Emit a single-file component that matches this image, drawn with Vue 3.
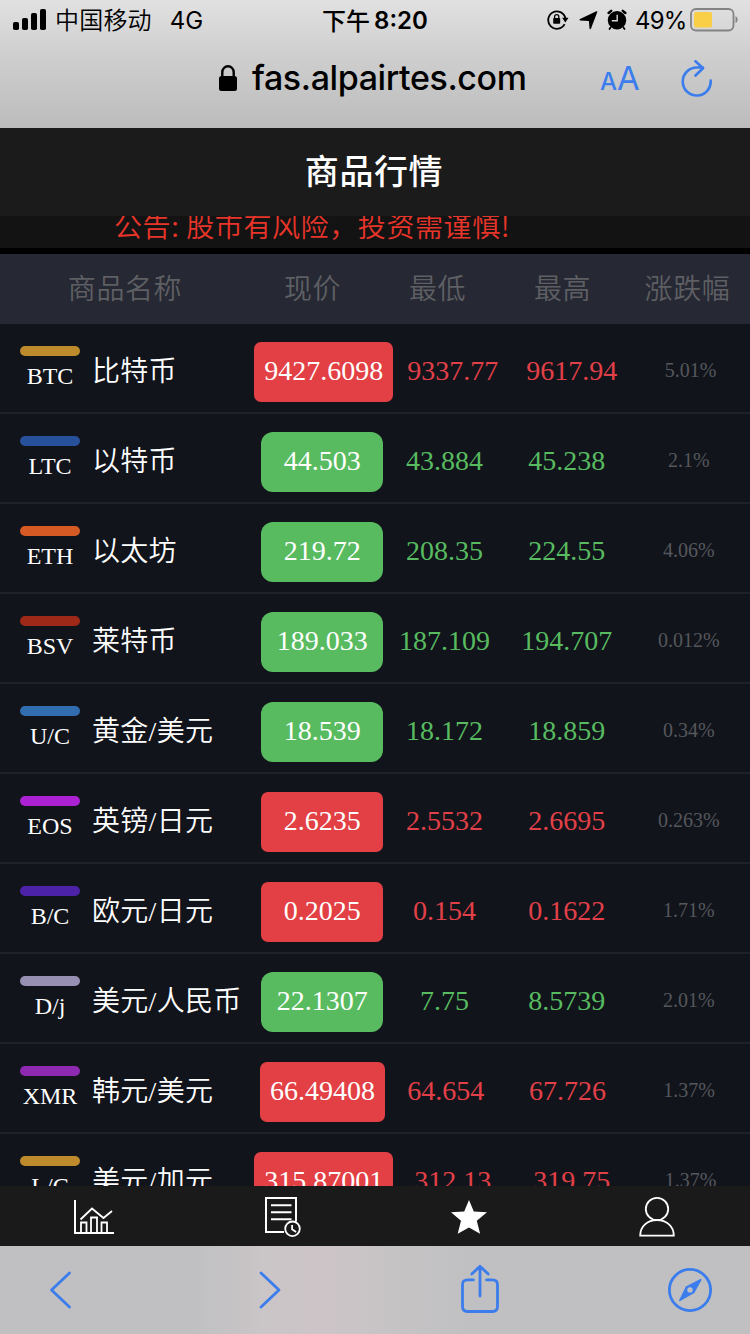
<template>
  <div class="screen">
    <!-- Browser top chrome -->
    <div class="browser-top">
      <div class="status-bar">
        <div class="status-left">
          <svg class="signal" width="34" height="22" viewBox="0 0 34 22">
            <rect x="0" y="13" width="6" height="8" rx="1.8" />
            <rect x="9" y="9" width="6" height="12" rx="1.8" />
            <rect x="18" y="4" width="6" height="17" rx="1.8" />
            <rect x="27" y="0" width="6" height="21" rx="1.8" />
          </svg>
          <span class="carrier">中国移动</span>
          <span class="network">4G</span>
        </div>
        <div class="status-time"><span class="period">下午</span><span>8:20</span></div>
        <div class="status-right">
          <svg width="22" height="22" viewBox="0 0 22 22">
            <path d="M17.6 15.2A8.7 8.7 0 1 1 18.4 9.2" fill="none" stroke="#000" stroke-width="1.8" />
            <path d="M15.1 8.8h6.4l-3.2 4.6z" />
            <rect x="6.2" y="9" width="7" height="5.8" rx=".8" />
            <path d="M7.6 9.5V7.8a2.1 2.1 0 0 1 4.2 0v1.7" fill="none" stroke="#000" stroke-width="1.3" />
          </svg>
          <svg class="location" width="19" height="19" viewBox="0 0 19 19">
            <path d="M18.300 1 12 17.600q-.9 1.300-1.500-.1L9.900 10 1.200 9.600q-1.500-.7-.1-1.500L17.300.3q1.200-.3 1 .7z" />
          </svg>
          <svg class="alarm" width="20" height="22" viewBox="0 0 20 22">
            <circle cx="10" cy="11.200" r="9.200" />
            <path d="M1.600 4 4.200 1.800M18.400 4l-2.600-2.200" fill="none" stroke="#000" stroke-width="2.400" stroke-linecap="round" />
            <path d="m3.500 18.500-1 1.500M16.500 18.500l1 1.500" stroke="#000" stroke-width="1.800" stroke-linecap="round" />
            <path d="M10.200 5.800v6H4.800" fill="none" stroke="#d8d8d8" stroke-width="1.400" />
          </svg>
          <span class="percent">49%</span>
          <svg class="battery" width="48" height="24" viewBox="0 0 48 24">
            <rect x="1" y="1" width="42.5" height="21.5" rx="5" fill="none" stroke="#838383" stroke-width="1.8" />
            <rect x="4" y="4" width="18" height="15.5" rx="2" fill="#f8cf46" />
            <path d="M45.500 8v7q2.200-1.200 2.200-3.500T45.500 8z" fill="#838383" />
          </svg>
        </div>
      </div>

      <div class="address-bar">
        <svg class="lock" width="19" height="27" viewBox="0 0 19 27">
          <rect x="0" y="11" width="18" height="15" rx="2.5" />
          <path d="M3.300 12V7.200a5.700 5.900 0 0 1 11.400 0V12" fill="none" stroke="#000" stroke-width="2.400" />
        </svg>
        <span class="url">fas.alpairtes.com</span>
        <span class="text-size"><small>A</small>A</span>
        <svg class="reload" width="32" height="37" viewBox="0 0 32 37">
          <path d="M29.700 20.500A14 14 0 1 1 15.700 7.500H22M14.500 1.200l7.500 7.100-7.500 7.200" />
        </svg>
      </div>
    </div>

    <header class="page-header">商品行情</header>
    <div class="notice"><span>公告: 股市有风险，投资需谨慎!</span></div>

    <div class="table-head">
      <span class="wide">商品名称</span>
      <span>现价</span>
      <span>最低</span>
      <span>最高</span>
      <span>涨跌幅</span>
    </div>

    <div class="quote-list">
      <div v-for="item in quotes" :key="item.code" class="quote-row" :class="item.trend">
        <div class="product">
          <div class="badge">
            <i class="badge-bar" :style="{ background: item.color }"></i>
            <span>{{ item.code }}</span>
          </div>
          <span class="product-name">{{ item.name }}</span>
        </div>
        <div class="price"><div class="price-value">{{ item.price }}</div></div>
        <div class="cell">{{ item.low }}</div>
        <div class="cell">{{ item.high }}</div>
        <div class="cell change">{{ item.change }}</div>
      </div>
    </div>

    <!-- App tabs -->
    <nav class="tab-bar">
      <div class="tab">
        <svg width="42" height="42" viewBox="0 0 42 42">
          <path d="M2 5v33h39" stroke-width="2" />
          <path d="M8 37.500V27.500h5.500v10M18 37.500v-15h6v15M28.500 37.500v-10H34v10" />
          <path d="m7.500 24.500 11.500-11 11.500 9.500 8.500-7" />
        </svg>
      </div>
      <div class="tab">
        <svg width="42" height="42" viewBox="0 0 42 42">
          <path d="M24 37H6V3h30v23.500M11 10.200h20.500M11 17.200h20.500M11 24.200h20.500" stroke-width="2" />
          <circle cx="32.500" cy="33.800" r="7.300" />
          <path d="M32.100 30v4.300l4 2.600" />
        </svg>
      </div>
      <div class="tab">
        <svg width="42" height="42" viewBox="0 0 42 42">
          <path class="solid" d="m21 5 4.800 11.500 13.200.8-10.200 8.500 3.300 13L21 32.500 9.700 38.800l3.300-13L3 17.300l13.200-.8z" />
        </svg>
      </div>
      <div class="tab">
        <svg width="42" height="42" viewBox="0 0 42 42">
          <circle cx="22" cy="14" r="11.200" />
          <path d="M5.200 40.600c0-9.500 7.200-15.400 16.800-15.400s16.800 5.900 16.800 15.400z" />
        </svg>
      </div>
    </nav>

    <!-- Browser bottom toolbar -->
    <div class="toolbar">
      <svg class="back" width="24" height="40" viewBox="0 0 24 40"><path d="M21.500 3 3.500 20l18 17" /></svg>
      <svg class="forward" width="24" height="40" viewBox="0 0 24 40"><path d="M3 3l18 17L3 37" /></svg>
      <svg class="share" width="40" height="50" viewBox="0 0 40 50">
        <path d="M13.500 15.800H7.500Q2.500 15.800 2.500 20.800V42.500Q2.500 47.500 7.500 47.500H32.500Q37.500 47.500 37.500 42.500V20.800Q37.500 15.800 32.500 15.800H26.500" />
        <path d="M20 32V2.500M11.800 10 20 2.300l8.200 7.700" />
      </svg>
      <svg class="compass" width="44" height="44" viewBox="0 0 44 44">
        <circle cx="22" cy="22" r="20.600" />
        <path class="needle" fill-rule="evenodd" d="M32.800 10.800Q34 11.400 33.300 12.600L26.300 25 12.200 33Q10.600 33.600 11.200 32L17.800 18.600zM22 19.200a2.700 2.700 0 1 0 0 5.400 2.700 2.700 0 0 0 0-5.400z" />
      </svg>
    </div>
  </div>
</template>

<script setup>
import { ref } from 'vue';

const quotes = ref([
  { code: 'BTC', name: '比特币', price: '9427.6098', low: '9337.77', high: '9617.94', change: '5.01%', color: '#bd8b2c', trend: 'down' },
  { code: 'LTC', name: '以特币', price: '44.503', low: '43.884', high: '45.238', change: '2.1%', color: '#27519b', trend: 'up' },
  { code: 'ETH', name: '以太坊', price: '219.72', low: '208.35', high: '224.55', change: '4.06%', color: '#d55a24', trend: 'up' },
  { code: 'BSV', name: '莱特币', price: '189.033', low: '187.109', high: '194.707', change: '0.012%', color: '#9f2919', trend: 'up' },
  { code: 'U/C', name: '黄金/美元', price: '18.539', low: '18.172', high: '18.859', change: '0.34%', color: '#326daf', trend: 'up' },
  { code: 'EOS', name: '英镑/日元', price: '2.6235', low: '2.5532', high: '2.6695', change: '0.263%', color: '#ac22d2', trend: 'down' },
  { code: 'B/C', name: '欧元/日元', price: '0.2025', low: '0.154', high: '0.1622', change: '1.71%', color: '#4c22a8', trend: 'down' },
  { code: 'D/j', name: '美元/人民币', price: '22.1307', low: '7.75', high: '8.5739', change: '2.01%', color: '#9890b3', trend: 'up' },
  { code: 'XMR', name: '韩元/美元', price: '66.49408', low: '64.654', high: '67.726', change: '1.37%', color: '#8e29b1', trend: 'down' },
  { code: 'L/C', name: '美元/加元', price: '315.87001', low: '312.13', high: '319.75', change: '1.37%', color: '#bd8b2c', trend: 'down' }
]);
</script>

<style>
body {
  margin: 0;
  background: #11141b;
}
</style>

<style scoped>
.screen {
  display: flex;
  flex-direction: column;
  width: 750px;
  height: 1334px;
  overflow: hidden;
  background: #11141b;
  font-family: "Liberation Serif", "Noto Sans CJK SC", serif;
}

svg {
  display: block;
  flex: none;
}

.browser-top {
  flex: none;
  height: 128px;
  background: linear-gradient(#e1e1e1, #cecece 45%, #bcbcbc);
  font-family: Inter, "Noto Sans CJK SC", sans-serif;
  color: #000;
}

.status-bar {
  display: grid;
  grid-template-columns: 260px 230px 260px;
  height: 40px;
}

.status-left,
.status-right,
.status-time {
  display: flex;
  align-items: center;
  white-space: nowrap;
}

.status-left {
  padding-left: 13px;
  font-size: 24px;
}

.carrier {
  margin: -3px 0 0 8px;
  font-weight: 350;
  letter-spacing: 0.2px;
}

.network {
  margin-left: 18px;
}

.status-time {
  justify-content: center;
  font-size: 24px;
  font-weight: 600;
}

.period {
  margin: -2px 4px 0 0;
  font-weight: 500;
}

.status-right {
  padding-left: 57px;
}

.location {
  margin-left: 10px;
}

.alarm {
  margin-left: 9px;
}

.percent {
  width: 55px;
  margin-left: 8px;
  font-size: 24px;
  letter-spacing: -0.8px;
}

.address-bar {
  display: flex;
  align-items: center;
  height: 78px;
  padding-left: 219px;
}

.lock {
  margin-top: -2px;
}

.url {
  width: 282px;
  margin: -3px 0 0 14px;
  font-size: 34px;
  font-weight: 550;
  letter-spacing: -0.4px;
  white-space: nowrap;
}

.text-size {
  width: 42px;
  margin: -2px 0 0 66px;
  color: #3b7ded;
  font-size: 33px;
  white-space: nowrap;
}

.text-size small {
  font-size: 24px;
  font-weight: 500;
}

.reload {
  margin: -2px 0 0 39px;
  fill: none;
  stroke: #3b7ded;
  stroke-width: 2.6;
  stroke-linecap: round;
  stroke-linejoin: round;
}

.page-header {
  flex: none;
  box-sizing: border-box;
  height: 88px;
  padding: 1px 2px 0 0;
  line-height: 88px;
  background: #1b1b1b;
  color: #fff;
  font-size: 34px;
  font-weight: 500;
  letter-spacing: 0.6px;
  text-align: center;
}

.notice {
  display: flex;
  flex: none;
  align-items: flex-end;
  height: 32px;
  padding-left: 114px;
  overflow: hidden;
  background: #131313;
  border-bottom: 6px solid #000;
  color: #e8352a;
  font-family: "Noto Sans CJK SC", sans-serif;
  font-size: 28px;
  font-weight: 350;
  line-height: 46px;
  letter-spacing: 0.6px;
}

.table-head {
  display: flex;
  flex: none;
  height: 70px;
  background: #262833;
  color: #5e5f63;
  font-size: 28px;
  font-weight: 350;
  line-height: 72px;
  letter-spacing: 0.6px;
  text-align: center;
}

.table-head span {
  flex: 1;
}

.table-head .wide {
  flex: 2;
}

.quote-list {
  flex: 1;
  min-height: 0;
  overflow: hidden;
}

.quote-row {
  display: flex;
  box-sizing: border-box;
  height: 90px;
  padding: 18px 0 10px 16.5px;
  border-bottom: 2px solid #1e2229;
  font-size: 28px;
  line-height: 58px;
}

/* Long prices widen their own cell, the rest of the row shares what is left */
.product {
  display: flex;
  flex: 2 1 0;
  min-width: 0;
  color: #fff;
  white-space: nowrap;
}

.badge {
  flex: none;
  width: 60px;
  margin-left: 3.5px;
  padding-top: 4px;
  font-size: 24px;
  line-height: 40px;
  text-align: center;
}

.badge-bar {
  display: block;
  height: 10px;
  border-radius: 5px;
}

.product-name {
  width: 0;
  margin-left: 12px;
  font-weight: 350;
  letter-spacing: 0.3px;
  line-height: 60px;
}

.price,
.cell {
  flex: 1 1 0;
  text-align: center;
}

.price {
  height: 60px;
  color: #fff;
}

.price-value {
  padding: 0 10px;
}

.up {
  color: #58bb60;
}

.down {
  color: #e24048;
}

.up .price {
  border-radius: 12px;
  background: #58bb60;
}

.down .price {
  border-radius: 7px;
  background: #e24044;
}

.quote-row .change {
  color: #55575c;
  font-size: 20px;
  line-height: 56px;
}

.tab-bar {
  display: flex;
  flex: none;
  height: 60px;
  background: #1a1a1a;
}

.tab {
  display: flex;
  flex: 1;
  align-items: center;
  justify-content: center;
}

.tab svg {
  fill: none;
  stroke: #fff;
  stroke-width: 1.8;
}

.tab .solid {
  fill: #fff;
  stroke: none;
}

.toolbar {
  display: flex;
  flex: none;
  align-items: center;
  box-sizing: border-box;
  height: 88px;
  padding-left: 48px;
  background: linear-gradient(90deg, transparent 26%, #cac5c7 35%, #cdc4c7 43%, #c8c4c5 50%, transparent 62%), #c0c0c2;
}

.toolbar svg {
  fill: none;
  stroke: #3b7ded;
  stroke-width: 2.8;
  stroke-linecap: round;
  stroke-linejoin: round;
}

.toolbar .forward {
  margin-left: 186px;
}

.toolbar .share {
  margin: -2px 0 0 178px;
}

.toolbar .compass {
  margin-left: 168px;
}

.toolbar .needle {
  fill: #3b7ded;
  stroke: none;
}
</style>
